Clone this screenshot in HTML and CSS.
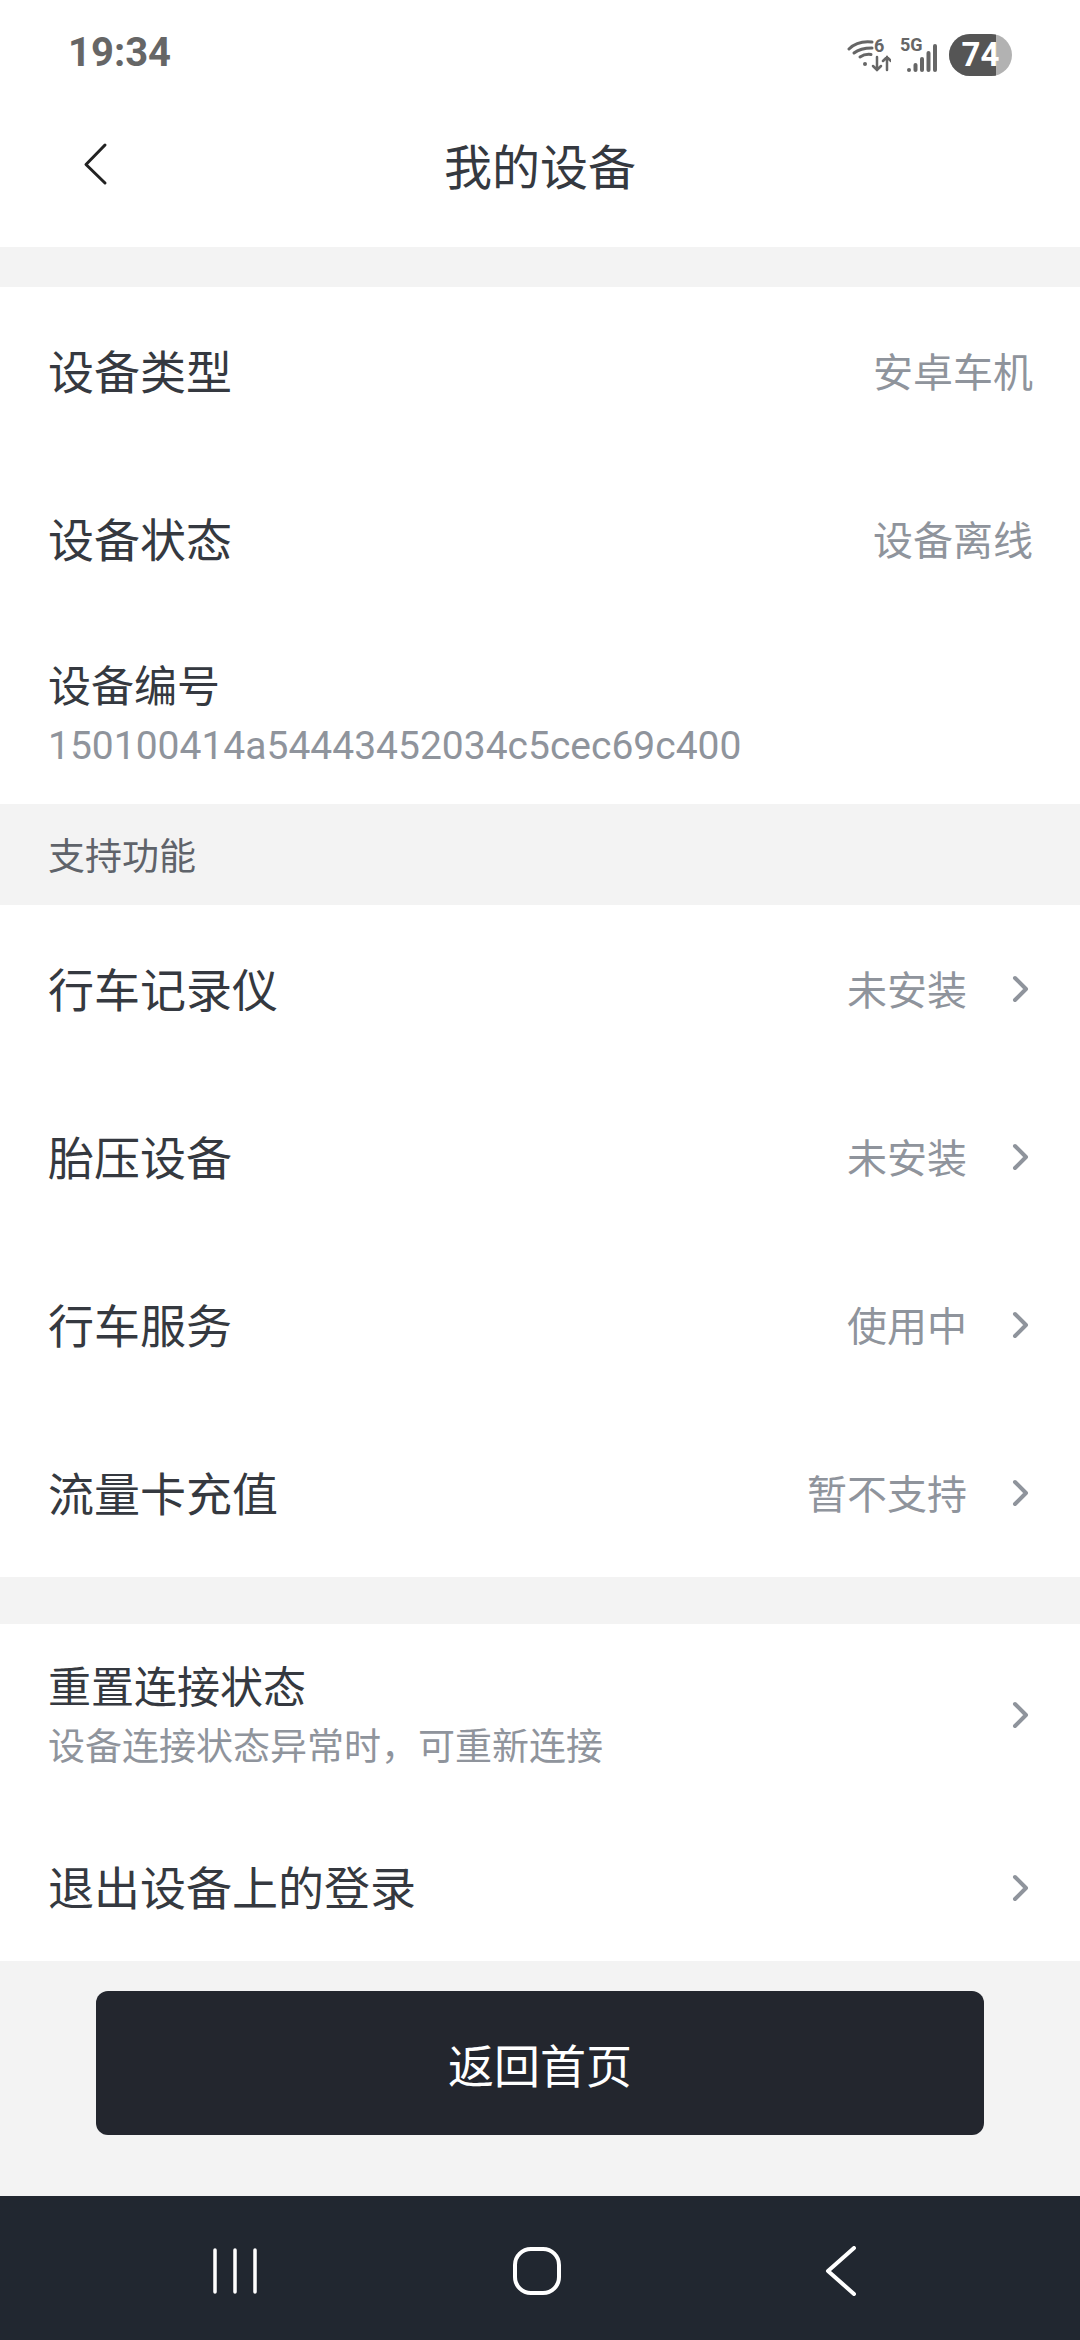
FILE: index.html
```html
<!DOCTYPE html>
<html lang="zh-CN">
<head>
<meta charset="utf-8">
<title>我的设备</title>
<link rel="stylesheet" href="styles.css">
</head>
<body>
<div class="screen">
  <div class="status">
    <span class="time">19:34</span>
    <div class="status-icons">
      <div class="wifi">
        <svg width="44" height="34" viewBox="0 0 44 34" fill="none" stroke="#666" stroke-width="3" stroke-linecap="round">
          <path d="M2 11C8 5 16 3 25 4"/>
          <path d="M7 15C12 11 18 10 25 10"/>
          <path d="M13 19C16 17 20 16 24 16.500"/>
          <circle cx="18" cy="26" r="2" fill="#666" stroke="none"/>
          <path d="M30 19V32M26 28L30 32L34 28" stroke-width="2.500"/>
          <path d="M40 32V19M36 23L40 19L44 23" stroke-width="2.500"/>
        </svg>
        <span class="wifi-num">6</span>
      </div>
      <div class="signal">
        <span class="net">5G</span>
        <svg class="bars" width="30" height="29" viewBox="0 0 30 29" fill="#666">
          <rect x="0" y="24" width="4" height="4" rx="2"/>
          <rect x="6.500" y="19" width="4" height="9" rx="2"/>
          <rect x="13" y="13" width="4" height="15" rx="2"/>
          <rect x="19.500" y="7" width="4" height="21" rx="2"/>
          <rect x="26" y="0" width="4" height="28" rx="2"/>
        </svg>
      </div>
      <div class="battery"><span class="battery-level"></span><span class="battery-num">74</span></div>
    </div>
  </div>

  <header class="nav">
    <svg class="back" width="28" height="44" viewBox="0 0 28 44" fill="none" stroke="#222" stroke-width="3" stroke-linecap="round" stroke-linejoin="round">
      <path d="M24 3L5 22.500L24 41"/>
    </svg>
    <h1 class="title">我的设备</h1>
  </header>

  <div class="gap"></div>

  <section class="group">
    <div class="row"><span class="label">设备类型</span><span class="value">安卓车机</span></div>
    <div class="row"><span class="label">设备状态</span><span class="value">设备离线</span></div>
    <div class="row-id">
      <span class="label-sm">设备编号</span>
      <span class="device-id">150100414a54443452034c5cec69c400</span>
    </div>
  </section>

  <div class="section-title">支持功能</div>

  <section class="group">
    <div class="row"><span class="label">行车记录仪</span><div class="right"><span class="value">未安装</span><svg class="chev" width="18" height="28" viewBox="0 0 18 28"><path d="M3 3L14 14L3 25"/></svg></div></div>
    <div class="row"><span class="label">胎压设备</span><div class="right"><span class="value">未安装</span><svg class="chev" width="18" height="28" viewBox="0 0 18 28"><path d="M3 3L14 14L3 25"/></svg></div></div>
    <div class="row"><span class="label">行车服务</span><div class="right"><span class="value">使用中</span><svg class="chev" width="18" height="28" viewBox="0 0 18 28"><path d="M3 3L14 14L3 25"/></svg></div></div>
    <div class="row"><span class="label">流量卡充值</span><div class="right"><span class="value">暂不支持</span><svg class="chev" width="18" height="28" viewBox="0 0 18 28"><path d="M3 3L14 14L3 25"/></svg></div></div>
  </section>

  <div class="gap gap-mid"></div>

  <section class="group">
    <div class="row-reset">
      <div class="stack">
        <span class="label-sm">重置连接状态</span>
        <span class="hint">设备连接状态异常时，可重新连接</span>
      </div>
      <svg class="chev chev-low" width="18" height="28" viewBox="0 0 18 28"><path d="M3 3L14 14L3 25"/></svg>
    </div>
    <div class="row-logout"><span class="label">退出设备上的登录</span><svg class="chev" width="18" height="28" viewBox="0 0 18 28"><path d="M3 3L14 14L3 25"/></svg></div>
  </section>

  <div class="footer">
    <button class="home-btn">返回首页</button>
  </div>

  <nav class="sysnav">
    <svg width="46" height="46" viewBox="0 0 46 46" fill="none" stroke="#fff" stroke-width="3.500" stroke-linecap="round">
      <path d="M3 2V44M23 2V44M43 2V44"/>
    </svg>
    <svg class="sys-home" width="48" height="48" viewBox="0 0 48 48" fill="none" stroke="#fff" stroke-width="4">
      <rect x="2" y="2" width="44" height="44" rx="16"/>
    </svg>
    <svg width="32" height="50" viewBox="0 0 32 50" fill="none" stroke="#fff" stroke-width="4" stroke-linecap="round" stroke-linejoin="round">
      <path d="M29 2L3 25L29 48"/>
    </svg>
  </nav>
</div>
</body>
</html>
```

FILE: styles.css
```css
* { box-sizing: border-box; }
html, body { margin: 0; padding: 0; }
body {
  width: 1080px;
  height: 2340px;
  background: #f3f3f3;
  font-family: "Noto Sans CJK SC", "Noto Sans", sans-serif;
  color: #353940;
  overflow: hidden;
}
.screen { display: flex; flex-direction: column; height: 2340px; }

.status {
  height: 82px;
  background: #fff;
  display: flex;
  align-items: flex-end;
  justify-content: space-between;
  padding: 0 68px 6px 68px;
}
.time {
  font-family: Roboto, sans-serif;
  font-weight: 700;
  font-size: 40px;
  line-height: 46px;
  color: #666;
}
.status-icons { display: flex; align-items: center; gap: 12px; }
.wifi { position: relative; width: 44px; height: 34px; margin-right: -3px; }
.wifi svg { display: block; }
.wifi-num {
  position: absolute;
  left: 27px;
  top: -2px;
  font: 700 18px/20px Roboto, sans-serif;
  color: #666;
}
.signal {
  position: relative;
  width: 37px;
  height: 36px;
  display: flex;
  justify-content: flex-end;
  align-items: flex-end;
}
.bars { display: block; }
.net {
  position: absolute;
  left: 0;
  top: -2px;
  font: 700 18px/20px Roboto, sans-serif;
  color: #666;
}
.battery {
  position: relative;
  width: 63px;
  height: 42px;
  border-radius: 21px;
  background: #b2b2b2;
  overflow: hidden;
  display: flex;
  align-items: center;
  justify-content: center;
}
.battery-level { position: absolute; left: 0; top: 0; bottom: 0; width: 47px; background: #555; }
.battery-num {
  position: relative;
  font: 700 33px/42px Roboto, sans-serif;
  color: #fff;
}

.nav {
  height: 165px;
  background: #fff;
  display: flex;
  align-items: center;
  justify-content: center;
  position: relative;
}
.back { position: absolute; left: 81px; top: 60px; }
.title { margin: 0 0 2px; font-size: 48px; font-weight: 400; line-height: 60px; color: #353940; }

.gap { height: 40px; }
.gap-mid { height: 47px; }

.group { background: #fff; display: flex; flex-direction: column; }
.row, .row-logout {
  height: 168px;
  padding: 0 47px 0 48px;
  display: flex;
  align-items: center;
  justify-content: space-between;
}
.row-logout { height: 161px; padding-top: 14px; }
.label { font-size: 46px; line-height: 60px; color: #353940; margin-bottom: 5px; }
.label-sm { font-size: 43px; line-height: 56px; color: #353940; }
.value { font-size: 40px; line-height: 52px; color: #8f949c; margin-bottom: 3px; }
.right { display: flex; align-items: center; gap: 45px; margin-right: 3px; }
.chev { fill: none; stroke: #8f949c; stroke-width: 4; stroke-linecap: round; stroke-linejoin: round; flex: none; }
.row-reset > .chev, .row-logout > .chev { margin-right: 3px; }
.row-reset > .chev-low { margin-top: 5px; }

.row-id {
  height: 181px;
  padding: 0 48px;
  display: flex;
  flex-direction: column;
  justify-content: flex-start;
}
.row-id .label-sm { margin-top: 32px; }
.device-id {
  font-family: Roboto, sans-serif;
  font-size: 39px;
  line-height: 52px;
  color: #8f949c;
  margin-top: 9px;
}

.section-title {
  height: 101px;
  padding: 0 0 2px 48px;
  display: flex;
  align-items: center;
  font-size: 37px;
  color: #5f636a;
}

.row-reset {
  height: 176px;
  padding: 0 47px 0 48px;
  display: flex;
  align-items: center;
  justify-content: space-between;
}
.stack { display: flex; flex-direction: column; }
.stack .label-sm { margin-top: 1px; }
.hint { font-size: 37px; line-height: 50px; color: #8f949c; margin-top: 7px; }

.footer { flex: 1; display: flex; justify-content: center; align-items: flex-start; padding-top: 30px; }
.home-btn {
  width: 888px;
  height: 144px;
  border: 0;
  border-radius: 12px;
  background: #23262e;
  color: #fff;
  font-family: inherit;
  font-size: 46px;
  padding-bottom: 2px;
}

.sysnav {
  height: 144px;
  background: #212730;
  display: flex;
  align-items: center;
  gap: 255px;
  padding: 6px 0 0 212px;
}
.sys-home { margin-right: 9px; }
```
